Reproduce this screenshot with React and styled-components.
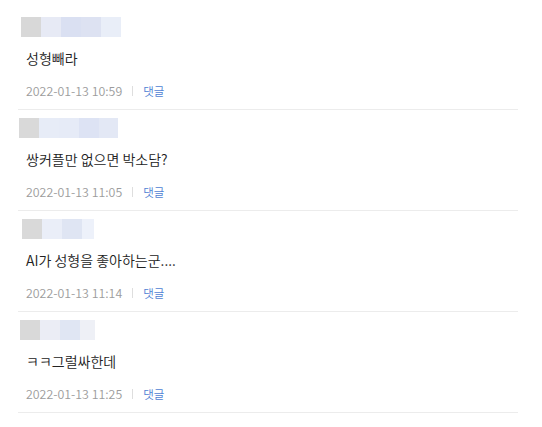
import React from "react";
import styled, { createGlobalStyle } from "styled-components";

const GlobalStyle = createGlobalStyle`
  html, body { margin: 0; padding: 0; background: #ffffff; }
  body { font-family: "Noto Sans CJK KR", "Noto Sans", sans-serif; }
`;

const List = styled.ul`
  list-style: none;
  margin: 0;
  padding: 9px 0 0 18px;
  width: 500px;
`;

const Item = styled.li`
  display: flex;
  flex-direction: column;
  align-items: flex-start;
  padding: 8px 0 9px;
  border-bottom: 1px solid #ececec;
`;

const Nick = styled.div`
  display: flex;
  height: 20px;
  margin-left: ${(p) => p.$offset}px;
`;

const Tile = styled.span`
  display: block;
  width: ${(p) => p.$w || 20}px;
  height: 20px;
  background: ${(p) => p.$c};
`;

const Text = styled.p`
  margin: 10px 0 0;
  padding-left: 8px;
  font-size: 14px;
  font-weight: 350;
  line-height: 22px;
  color: #222222;
`;

const Meta = styled.div`
  display: flex;
  align-items: center;
  margin-top: 13px;
  padding-left: 8px;
  height: 18px;
  font-size: 12px;
  line-height: 18px;
`;

const Date = styled.span`
  color: #9c9c9c;
  font-size: 12.4px;
  font-weight: 350;
`;

const Sep = styled.span`
  display: block;
  width: 1px;
  height: 10px;
  margin: 0 10px 0 10px;
  background: #dedede;
`;

const Reply = styled.a`
  color: #4f82d4;
  text-decoration: none;
  font-size: 11.5px;
  font-weight: 350;
  cursor: pointer;
`;

const comments = [
  {
    offset: 3,
    tiles: [
      ["#d8d8d8", 20],
      ["#e7eaf5", 20],
      ["#dae0f2", 20],
      ["#dde2f2", 20],
      ["#e9eef8", 20],
    ],
    text: "성형빼라",
    date: "2022-01-13 10:59",
  },
  {
    offset: 1,
    tiles: [
      ["#d9d9d9", 20],
      ["#e7ecf7", 20],
      ["#e6ebf7", 20],
      ["#dde3f4", 20],
      ["#e3e8f5", 19],
    ],
    text: "쌍커플만 없으면 박소담?",
    date: "2022-01-13 11:05",
  },
  {
    offset: 4,
    tiles: [
      ["#d9d9d9", 20],
      ["#eaeef8", 20],
      ["#dfe5f3", 20],
      ["#edf1fa", 12],
    ],
    text: "AI가 성형을 좋아하는군....",
    date: "2022-01-13 11:14",
  },
  {
    offset: 2,
    tiles: [
      ["#d9d9d9", 20],
      ["#ebedf5", 20],
      ["#e0e6f3", 20],
      ["#eef0f6", 15],
    ],
    text: "ㅋㅋ그럴싸한데",
    date: "2022-01-13 11:25",
  },
];

export default function App() {
  return (
    <>
      <GlobalStyle />
      <List>
        {comments.map((c, i) => (
          <Item key={i}>
            <Nick $offset={c.offset}>
              {c.tiles.map(([color, w], j) => (
                <Tile key={j} $c={color} $w={w} />
              ))}
            </Nick>
            <Text>{c.text}</Text>
            <Meta>
              <Date>{c.date}</Date>
              <Sep />
              <Reply>댓글</Reply>
            </Meta>
          </Item>
        ))}
      </List>
    </>
  );
}
